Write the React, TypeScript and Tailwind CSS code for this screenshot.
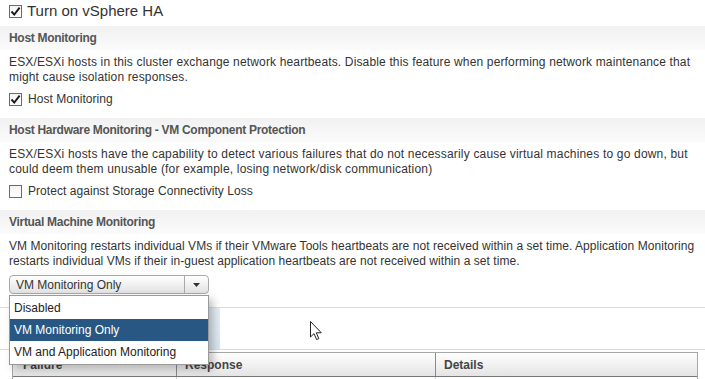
import { useState } from "react";

const options = ["Disabled", "VM Monitoring Only", "VM and Application Monitoring"];

function Checkbox({ checked }: { checked: boolean }) {
  return (
    <span className="flex h-[13px] w-[13px] shrink-0 items-center justify-center border border-[#6b6b6b] bg-gradient-to-b from-[#f4f4f4] to-white">
      {checked && (
        <svg width="11" height="11" viewBox="0 0 11 11">
          <path d="M1.5 5.5 L4.3 8.6 L9.6 1.6" fill="none" stroke="#1a1a1a" strokeWidth="1.9" />
        </svg>
      )}
    </span>
  );
}

function SectionHeader({ title }: { title: string }) {
  return (
    <div className="h-[24px] bg-gradient-to-b from-[#f1f1f1] to-[#fbfbfb] pl-[9px] text-[12px] font-bold leading-[24px] tracking-[-0.3px] text-[#555]">
      {title}
    </div>
  );
}

function CheckRow({ label, checked, className }: { label: string; checked: boolean; className?: string }) {
  return (
    <div className={"flex h-[14px] items-center gap-[6px] pl-[9px] text-[12px] text-[#333] " + (className ?? "")}>
      <Checkbox checked={checked} />
      <span className="tracking-[0.05px]">{label}</span>
    </div>
  );
}

function Cursor() {
  return (
    <svg className="absolute left-[310px] top-[321px]" width="13" height="20" viewBox="0 0 13 20">
      <path d="M0.5 0.5 L0.5 16 L4 12.6 L6.6 18.6 L8.8 17.6 L6.3 11.8 L11.3 11.8 Z" fill="white" stroke="#222" strokeWidth="1" />
    </svg>
  );
}

export default function App() {
  const [selected] = useState(1);

  return (
    <div className="relative h-[379px] w-[705px] overflow-hidden bg-white font-['Liberation_Sans',Arial,sans-serif] text-[#333]">
      <div className="flex h-[23px] items-center gap-[5px] pl-[9px]">
        <Checkbox checked />
        <span className="text-[15px] text-[#333]">Turn on vSphere HA</span>
      </div>

      <div className="mt-[3px]">
        <SectionHeader title="Host Monitoring" />
        <p className="mt-[5px] whitespace-nowrap pl-[9px] text-[12px] leading-[15px] tracking-[0.15px]">
          ESX/ESXi hosts in this cluster exchange network heartbeats. Disable this feature when performing network maintenance that
          <br />
          might cause isolation responses.
        </p>
        <CheckRow className="mt-[7px]" checked label="Host Monitoring" />
      </div>

      <div className="mt-[12px]">
        <SectionHeader title="Host Hardware Monitoring - VM Component Protection" />
        <p className="mt-[5px] whitespace-nowrap pl-[9px] text-[12px] leading-[15px] tracking-[0.18px]">
          ESX/ESXi hosts have the capability to detect various failures that do not necessarily cause virtual machines to go down, but
          <br />
          could deem them unusable (for example, losing network/disk communication)
        </p>
        <CheckRow className="mt-[7px]" checked={false} label="Protect against Storage Connectivity Loss" />
      </div>

      <div className="mt-[12px]">
        <SectionHeader title="Virtual Machine Monitoring" />
        <p className="mt-[5px] whitespace-nowrap pl-[9px] text-[12px] leading-[15px] tracking-[0.05px]">
          VM Monitoring restarts individual VMs if their VMware Tools heartbeats are not received within a set time. Application Monitoring
          <br />
          restarts individual VMs if their in-guest application heartbeats are not received within a set time.
        </p>

        <div className="relative z-10 ml-[9px] mt-[6px] w-[200px]">
          <div className="flex h-[19px] items-center rounded-[4px] border border-[#a9a9a9] bg-gradient-to-b from-white to-[#e2e2e2] text-[12px]">
            <span className="flex-1 pl-[6px]">{options[selected]}</span>
            <span className="flex h-full w-[24px] items-center justify-center border-l border-[#a9a9a9]">
              <svg width="7" height="4" viewBox="0 0 7 4">
                <path d="M0 0 L7 0 L3.5 4 Z" fill="#333" />
              </svg>
            </span>
          </div>
          <ul className="absolute left-0 top-[20px] w-[200px] border border-[#9a9a9a] bg-white py-[1px] text-[12px] shadow-[4px_4px_8px_rgba(0,0,0,0.25)]">
            {options.map((o, i) => (
              <li
                key={o}
                className={
                  "h-[22px] pl-[4px] leading-[22px] " +
                  (i === selected ? "bg-[#295783] text-white" : "text-[#222]")
                }
              >
                {o}
              </li>
            ))}
          </ul>
        </div>
      </div>

      <div className="mt-[13px] flex h-[43px] border-y border-[#dcdcdc]">
        <div className="ml-[10px] w-[210px] bg-gradient-to-b from-[#e6eef5] to-[#d9e6f0]" />
      </div>

      <div className="ml-[12px] mt-[2px] w-[686px] border border-[#a8a8a8]">
        <div className="flex h-[24px] border-b border-[#777] bg-gradient-to-b from-white to-[#e4e4e4] text-[12px] font-bold text-[#444]">
          <div className="w-[164px] border-r border-[#8a8a8a] pl-[10px] leading-[24px]">Failure</div>
          <div className="w-[259px] border-r border-[#8a8a8a] pl-[8px] leading-[24px]">Response</div>
          <div className="flex-1 pl-[8px] leading-[24px]">Details</div>
        </div>
        <div className="flex h-[10px]">
          <div className="w-[164px] border-r border-[#ccc]" />
          <div className="w-[259px] border-r border-[#ccc]" />
        </div>
      </div>

      <Cursor />
    </div>
  );
}
